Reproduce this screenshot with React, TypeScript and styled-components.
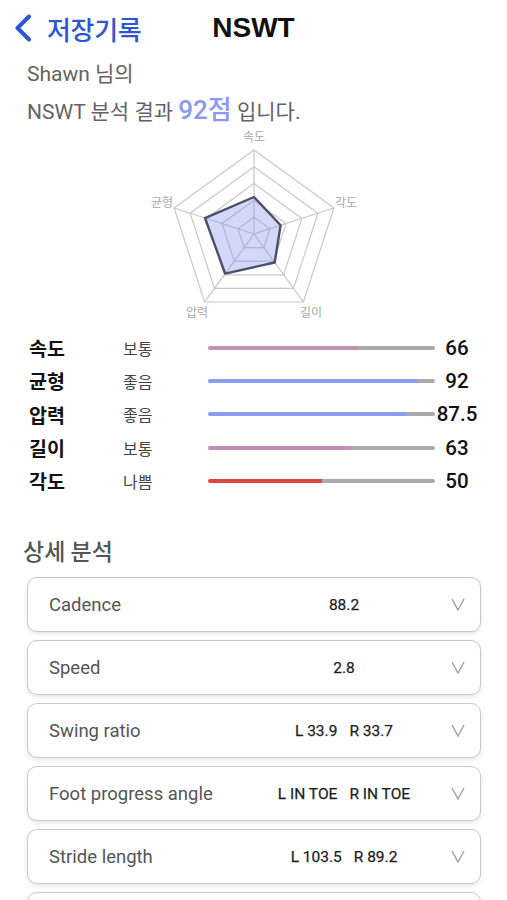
import React from "react";
import styled, { createGlobalStyle } from "styled-components";

const GlobalStyle = createGlobalStyle`
  html, body { margin: 0; padding: 0; background: #ffffff; }
  body { font-family: "Roboto", "Noto Sans CJK KR", sans-serif; }
  * { box-sizing: border-box; }
`;

const Page = styled.div`
  width: 507px;
  height: 900px;
  overflow: hidden;
  background: #fff;
`;

const Header = styled.header`
  height: 56px;
  display: grid;
  grid-template-columns: 1fr auto 1fr;
  align-items: center;
  padding: 0 14px;
`;

const BackButton = styled.div`
  display: flex;
  align-items: center;
  gap: 15px;
  color: #2f55d6;
  font-family: "Noto Sans CJK KR", sans-serif;
  font-size: 26px;
  font-weight: 500;
  letter-spacing: -0.3px;
`;

const Title = styled.h1`
  margin: 0;
  font-family: "Liberation Sans", Arial, sans-serif;
  font-weight: 700;
  font-size: 28px;
  color: #111;
`;

const Greeting = styled.div`
  padding-left: 27px;
  color: #636363;
  font-size: 21px;
`;

const GreetLine = styled.div`
  height: 36px;
  line-height: 36px;
  white-space: nowrap;
`;

const Score = styled.span`
  color: #8c99f0;
  font-size: 26px;
  font-weight: 500;
`;

const ChartWrap = styled.div`
  display: flex;
  justify-content: center;
  height: 203px;
`;

const StatList = styled.div`
  padding-left: 29px;
`;

const StatRow = styled.div`
  height: 33.3px;
  display: grid;
  grid-template-columns: 94px 85px 227px 44px;
  align-items: center;
`;

const StatName = styled.div`
  font-family: "Noto Sans CJK KR", sans-serif;
  font-size: 19.5px;
  font-weight: 700;
  color: #111;
`;

const StatLevel = styled.div`
  font-family: "Noto Sans CJK KR", sans-serif;
  font-size: 16px;
  color: #444;
`;

const Track = styled.div`
  height: 4px;
  border-radius: 2px;
  background: #aaaaaa;
  overflow: hidden;
`;

const Fill = styled.div<{ $color: string }>`
  height: 100%;
  background: ${(p) => p.$color};
  border-radius: 2px 0 0 2px;
`;

const StatValue = styled.div`
  font-size: 20.5px;
  font-weight: 500;
  color: #111;
  text-align: center;
  white-space: nowrap;
`;

const SectionTitle = styled.h2`
  margin: 38px 0 12px;
  padding-left: 23px;
  height: 30px;
  line-height: 30px;
  font-family: "Noto Sans CJK KR", sans-serif;
  font-size: 23px;
  font-weight: 500;
  color: #555;
`;

const CardList = styled.div`
  display: flex;
  flex-direction: column;
  gap: 8px;
  padding: 0 26px 0 27px;
`;

const Card = styled.div`
  height: 55px;
  flex-shrink: 0;
  border: 1px solid #c9c9c9;
  border-radius: 10px;
  box-shadow: 0 2px 4px rgba(0, 0, 0, 0.1);
  background: #fff;
  display: grid;
  grid-template-columns: 1fr 162px 40px;
  align-items: center;
  padding: 0 15px 0 21px;
`;

const CardLabel = styled.div`
  font-size: 18.5px;
  color: #555;
  white-space: nowrap;
`;

const CardValue = styled.div`
  display: flex;
  justify-content: center;
  gap: 12px;
  font-size: 15.5px;
  color: #1e1e1e;
  white-space: nowrap;
  -webkit-text-stroke: 0.25px #1e1e1e;
`;

const Chevron = styled.svg`
  justify-self: end;
`;

const stats = [
  { name: "속도", level: "보통", value: 66, label: "66", color: "#c491b5" },
  { name: "균형", level: "좋음", value: 92, label: "92", color: "#8e9bf5" },
  { name: "압력", level: "좋음", value: 87.5, label: "87.5", color: "#8e9bf5" },
  { name: "길이", level: "보통", value: 63, label: "63", color: "#c491b5" },
  { name: "각도", level: "나쁨", value: 50, label: "50", color: "#e0443f" },
];

const details: { label: string; values: string[] }[] = [
  { label: "Cadence", values: ["88.2"] },
  { label: "Speed", values: ["2.8"] },
  { label: "Swing ratio", values: ["L 33.9", "R 33.7"] },
  { label: "Foot progress angle", values: ["L IN TOE", "R IN TOE"] },
  { label: "Stride length", values: ["L 103.5", "R 89.2"] },
];

// radar order clockwise from top
const radar = [
  { name: "속도", value: 66 },
  { name: "각도", value: 50 },
  { name: "길이", value: 63 },
  { name: "압력", value: 87.5 },
  { name: "균형", value: 92 },
];

const CX = 120;
const CY = 106;
const R = 84;
const MAX = 150;

const pt = (i: number, r: number) => {
  const a = -Math.PI / 2 + (i * 2 * Math.PI) / 5;
  return [CX + r * Math.cos(a), CY + r * Math.sin(a)];
};

const poly = (r: number) =>
  [0, 1, 2, 3, 4].map((i) => pt(i, r).map((v) => v.toFixed(1)).join(",")).join(" ");

const labelPos = [
  { x: 120, y: 10 },
  { x: 212, y: 76 },
  { x: 177, y: 186 },
  { x: 63, y: 186 },
  { x: 28, y: 76 },
];

const Radar = () => (
  <svg width="240" height="203" viewBox="0 0 240 203">
    {[0.2, 0.4, 0.6, 0.8, 1].map((f) => (
      <polygon key={f} points={poly(R * f)} fill="none" stroke="#c8c8c8" strokeWidth="1.2" />
    ))}
    {[0, 1, 2, 3, 4].map((i) => {
      const [x, y] = pt(i, R);
      return <line key={i} x1={CX} y1={CY} x2={x} y2={y} stroke="#c8c8c8" strokeWidth="1.2" />;
    })}
    <polygon
      points={radar
        .map((d, i) => pt(i, (R * d.value) / MAX).map((v) => v.toFixed(1)).join(","))
        .join(" ")}
      fill="rgba(130,142,235,0.35)"
      stroke="#4b5068"
      strokeWidth="2.4"
      strokeLinejoin="round"
    />
    {radar.map((d, i) => (
      <text
        key={d.name}
        x={labelPos[i].x}
        y={labelPos[i].y}
        fontSize="12"
        fill="#a8a8a8"
        textAnchor="middle"
        dominantBaseline="middle"
        fontFamily="Noto Sans CJK KR, sans-serif"
      >
        {d.name}
      </text>
    ))}
  </svg>
);

export default function App() {
  return (
    <Page>
      <GlobalStyle />
      <Header>
        <BackButton>
          <svg width="18" height="28" viewBox="0 0 18 28">
            <path d="M15 2.5 L3.5 14 L15 25.5" fill="none" stroke="#2f55d6" strokeWidth="4" strokeLinecap="round" strokeLinejoin="round" />
          </svg>
          저장기록
        </BackButton>
        <Title>NSWT</Title>
        <div />
      </Header>
      <Greeting>
        <GreetLine>Shawn 님의</GreetLine>
        <GreetLine>
          NSWT 분석 결과 <Score>92점</Score> 입니다.
        </GreetLine>
      </Greeting>
      <ChartWrap>
        <Radar />
      </ChartWrap>
      <StatList>
        {stats.map((s) => (
          <StatRow key={s.name}>
            <StatName>{s.name}</StatName>
            <StatLevel>{s.level}</StatLevel>
            <Track>
              <Fill $color={s.color} style={{ width: `${s.value}%` }} />
            </Track>
            <StatValue>{s.label}</StatValue>
          </StatRow>
        ))}
      </StatList>
      <SectionTitle>상세 분석</SectionTitle>
      <CardList>
        {details.map((d) => (
          <Card key={d.label}>
            <CardLabel>{d.label}</CardLabel>
            <CardValue>
              {d.values.map((v) => (
                <span key={v}>{v}</span>
              ))}
            </CardValue>
            <Chevron width="14" height="13" viewBox="0 0 14 13">
              <path d="M1 1 L7 12 L13 1" fill="none" stroke="#9a9a9a" strokeWidth="1.3" />
            </Chevron>
          </Card>
        ))}
        <Card />
      </CardList>
    </Page>
  );
}
